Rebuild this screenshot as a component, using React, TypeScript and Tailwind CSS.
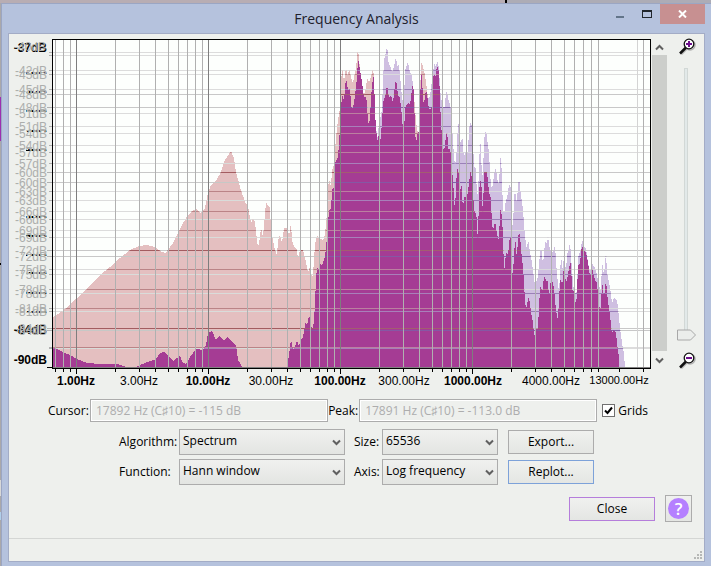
import type { ReactNode } from 'react';

const BASE = 368;

// outlines as x,y pairs, closed down to the axis
const PINK =
  '52,318 58,314 65,309 76,299 85,291 100,275 110,267 120,258 130,250 139,246 147,245 155,247 162,252 165,253 168,250 173,243 180,229 187,216 192,211 196,209 201,213 205,208 208,193 211,185 215,182 220,174 225,160 229,154 231,151 234,158 236,172 240,187 243,196 246,204 248,206 251,223 253,218 255,222 257,240 258,247 260,238 261,227 263,237 265,215 266,202 268,206 270,208 271,230 273,240 275,250 277,255 278,241 280,235 282,243 284,228 288,228 289,237 291,223 292,240 294,246 297,250 298,260 300,250 303,250 306,262 308,273 310,266 311,275 313,277 314,257 316,237 318,235 319,240 321,238 323,241 325,235 327,212 328,190 329,179 331,187 332,170 334,165 336,137 338,120 340,108 341,87 342,66 344,82 346,68 348,77 349,67 351,78 353,83 355,73 356,68 358,47 359,60 361,77 362,88 364,95 366,88 367,78 369,82 371,77 373,68 374,78 375,110 376,150 413,150 414,93 415,110 417,130 419,133 421,63 422,63 423,67 425,75 427,90 428,100 429,150';

const LAVENDER =
  '375,150 375,123 377,133 378,140 379,117 380,120 382,110 383,80 384,63 385,54 386,54 387,45 388,55 389,68 390,63 391,70 393,71 394,65 395,63 396,55 397,66 399,64 400,77 401,84 402,100 404,100 405,70 406,68 408,61 409,69 412,76 413,85 414,100 415,150 420,150 425,110 428,98 430,96 432,80 434,65 435,63 436,68 437,60 439,68 440,87 441,98 443,107 445,107 446,90 448,97 449,103 450,102 452,123 453,143 455,167 457,147 458,119 459,128 461,147 462,134 463,143 464,160 465,150 467,158 468,147 469,133 470,122 472,126 473,145 474,163 475,170 476,166 477,200 479,175 480,133 482,175 483,176 484,140 486,130 487,138 489,153 491,187 493,185 494,173 496,168 497,178 499,185 500,163 501,153 502,183 503,207 504,217 506,199 507,199 509,184 511,188 512,227 513,223 515,184 516,203 517,198 519,178 521,195 523,210 525,237 527,250 528,239 530,252 532,263 534,278 535,285 538,277 539,264 541,246 543,265 545,242 547,243 548,237 550,250 553,252 555,245 557,275 559,292 560,275 561,256 563,272 564,251 566,272 567,255 569,248 570,242 572,270 574,293 577,292 578,257 581,250 582,239 584,247 586,249 588,262 590,272 592,263 595,268 597,275 599,285 601,292 602,261 604,275 606,253 607,273 610,287 612,303 614,298 617,300 619,317 620,328 622,343 624,353 625,368';

const MAGENTA =
  '52,348 57,349 63,352 70,355 77,359 87,363 100,364 117,364 127,367 134,368 140,365 150,361 156,359 160,353 164,352 168,355 173,361 177,358 180,356 183,363 186,364 190,357 196,349 203,350 206,345 208,333 212,331 216,340 219,336 224,340 228,337 233,343 236,345 238,360 240,363 242,367 287,367 289,355 291,339 293,350 296,344 297,340 299,346 301,339 303,337 305,325 306,322 307,326 309,315 311,323 312,331 314,322 315,303 316,280 317,267 319,270 320,264 322,266 325,257 327,237 328,220 330,207 331,210 332,190 334,187 335,163 338,157 339,143 341,110 342,95 344,100 346,78 348,90 350,88 351,103 352,110 354,103 355,95 357,78 358,58 360,70 362,82 363,90 364,97 366,97 367,103 368,124 370,120 371,97 373,77 374,77 375,110 376,130 378,143 379,130 380,145 382,123 383,103 384,100 386,93 387,84 389,98 391,95 393,103 394,93 396,79 398,95 400,98 402,117 403,130 404,135 405,108 408,103 410,105 411,97 413,83 414,95 415,130 416,143 418,131 419,133 420,110 421,68 423,95 424,108 425,93 427,91 428,105 430,110 432,106 433,83 434,70 435,80 437,65 439,72 440,100 441,123 442,137 444,153 445,143 447,131 449,155 450,143 451,160 453,180 455,213 456,183 458,164 460,200 461,178 463,210 464,197 467,198 469,183 471,169 472,182 475,217 476,209 478,242 479,190 481,178 483,215 484,172 487,172 489,192 491,198 492,227 494,228 495,220 497,235 499,240 500,213 501,207 503,233 504,273 506,253 508,255 510,235 511,240 512,278 514,260 515,236 517,260 518,235 520,233 521,250 523,267 525,300 526,310 528,299 529,297 531,312 533,323 534,335 536,333 537,325 538,332 539,303 541,282 542,295 544,276 547,282 548,280 549,300 551,278 553,283 554,288 556,310 558,321 559,297 561,275 562,288 564,266 566,283 568,275 569,268 571,261 572,290 574,292 576,305 577,293 578,265 580,263 582,244 583,250 586,252 588,262 590,277 592,268 595,280 597,283 599,307 601,308 602,280 604,298 606,280 608,302 610,315 612,335 613,330 616,333 617,343 619,357 619,368';

const close = (points: string) => {
  const list = points.split(' ');
  const first = list[0].split(',')[0];
  const last = list[list.length - 1].split(',')[0];
  return `${first},${BASE} ${points} ${last},${BASE}`;
};

// [y, strong]
const FIRST_GRID: [number, boolean][] = [
  [55, false], [74, false], [94, true], [113, false], [133, false], [152, false], [172, true], [191, false],
  [211, false], [230, false], [250, true], [269, false], [289, false], [308, false], [328, true], [347, false],
];
const SECOND_GRID: [number, boolean][] = [
  [52, false], [70, false], [89, false], [107, true], [126, false], [145, false], [163, false], [182, true],
  [200, false], [219, false], [237, false], [256, true], [274, false], [293, false], [311, false], [330, true], [348, false],
];

const MINOR_X = [
  55, 63, 70, 115, 139, 155, 168, 178, 187, 195, 202, 247, 271, 287, 300, 310, 319, 327, 334, 379, 403, 419, 432,
  442, 451, 459, 466, 511, 535, 551, 564, 574, 583, 591, 598, 643,
];
const MAJOR_X = [76, 208, 340, 472];

const FIRST_LABELS: [string, number][] = [
  ['-45dB', 75], ['-48dB', 95], ['-51dB', 114], ['-54dB', 134], ['-57dB', 153], ['-60dB', 173], ['-63dB', 192],
  ['-66dB', 212], ['-69dB', 231], ['-72dB', 251], ['-75dB', 270], ['-78dB', 290], ['-81dB', 309], ['-84dB', 329],
];
const SECOND_LABELS: [string, number][] = [
  ['-42dB', 71], ['-45dB', 90], ['-48dB', 108], ['-51dB', 127], ['-54dB', 146], ['-57dB', 164], ['-60dB', 183],
  ['-63dB', 201], ['-66dB', 220], ['-69dB', 238], ['-72dB', 257], ['-75dB', 275], ['-78dB', 294], ['-81dB', 312],
  ['-84dB', 331],
];
const BOLD_LABELS: [string, number][] = [
  ['-42dB', 71], ['-45dB', 90], ['-48dB', 109], ['-51dB', 129], ['-54dB', 148], ['-66dB', 215], ['-69dB', 234],
  ['-72dB', 253], ['-75dB', 271], ['-78dB', 291], ['-81dB', 310],
];

const X_LABELS: [string, number, boolean][] = [
  ['1.00Hz', 76, true], ['3.00Hz', 139, false], ['10.00Hz', 208, true], ['30.00Hz', 271, false],
  ['100.00Hz', 340, true], ['300.00Hz', 404, false], ['1000.00Hz', 473, true], ['4000.00Hz', 551, false],
];

function HLines({ rows, soft, strong, clip }: { rows: [number, boolean][]; soft: string; strong: string; clip?: string }) {
  return (
    <g clipPath={clip}>
      {rows.map(([y, isStrong]) => (
        <rect key={y} x={53} y={y} width={597} height={1} fill={isStrong ? strong : soft} />
      ))}
    </g>
  );
}

function SpectrumPlot() {
  return (
    <svg
      viewBox="9 34 643 356"
      className="block min-w-0 flex-1"
      role="img"
      aria-label="Spectrum"
      fontFamily='"Liberation Sans", Arial, sans-serif'
      fontSize={12}
    >
      <defs>
        <clipPath id="pink"><polygon points={close(PINK)} /></clipPath>
        <clipPath id="lavender"><polygon points={close(LAVENDER)} /></clipPath>
        <clipPath id="magenta"><polygon points={close(MAGENTA)} /></clipPath>
        <clipPath id="slivers">
          {BOLD_LABELS.map(([, y]) => (
            <rect key={y} x={26} y={y + 1} width={22} height={2} />
          ))}
        </clipPath>
      </defs>

      <g shapeRendering="crispEdges">
        <rect x={52} y={39} width={599} height={330} fill="#fdfffd" />
        <HLines rows={FIRST_GRID} soft="#dcdcdc" strong="#c8c8c8" />
        <HLines rows={SECOND_GRID} soft="#dcdcdc" strong="#c8c8c8" />
        <polygon points={close(PINK)} fill="#e4bfc0" />
        <HLines rows={FIRST_GRID} soft="#bb8487" strong="#a35c60" clip="url(#pink)" />
        <HLines rows={SECOND_GRID} soft="#d9dcda" strong="#c6c8c6" clip="url(#pink)" />
        <polygon points={close(LAVENDER)} fill="#cfbfe1" />
        <HLines rows={FIRST_GRID} soft="#d9d9dc" strong="#c5c0c8" clip="url(#lavender)" />
        <HLines rows={SECOND_GRID} soft="#9b80b8" strong="#8465a8" clip="url(#lavender)" />
        <polygon points={close(MAGENTA)} fill="#a53c94" />
        <HLines rows={FIRST_GRID} soft="#bb80a0" strong="#a35d70" clip="url(#magenta)" />
        <HLines rows={SECOND_GRID} soft="#a880ba" strong="#8558a4" clip="url(#magenta)" />

        {MINOR_X.map((x) => (
          <rect key={x} x={x} y={40} width={1} height={328} fill="#b0b0b0" />
        ))}
        <rect x={637} y={40} width={1} height={328} fill="#d4d4d4" />
        {MAJOR_X.map((x) => (
          <rect key={x} x={x} y={40} width={1} height={328} fill="#7e7e7e" />
        ))}

        <rect x={53} y={367} width={597} height={1} fill="#808080" />
        <path d="M52 39h599v330H52zM53 40v328h597V40z" fill="#000" fillRule="evenodd" />
        <rect x={47} y={367} width={5} height={1} fill="#000" />
        {[...MINOR_X, 619].map((x) => (
          <rect key={x} x={x} y={369} width={1} height={3} fill="#000" />
        ))}
        {MAJOR_X.map((x) => (
          <rect key={x} x={x} y={369} width={1} height={5} fill="#000" />
        ))}
        {[...FIRST_GRID, ...SECOND_GRID].map(([y, isStrong]) => (
          <rect key={y} x={isStrong ? 47 : 49} y={y} width={isStrong ? 5 : 3} height={1} fill="#b0b0b0" />
        ))}
      </g>

      <g textAnchor="end" fontWeight={700}>
        <text x={47} y={52}>-37dB</text>
        <text x={47} y={334}>-84dB</text>
        <text x={47} y={364}>-90dB</text>
        <g clipPath="url(#slivers)">
          {BOLD_LABELS.map(([label, y]) => (
            <text key={y} x={47} y={y + 5}>{label}</text>
          ))}
        </g>
      </g>
      <g textAnchor="end" fill="#acaeac">
        <text x={46} y={51}>-40dB</text>
        {FIRST_LABELS.map(([label, y]) => (
          <text key={y} x={47} y={y + 4}>{label}</text>
        ))}
        {SECOND_LABELS.map(([label, y]) => (
          <text key={y} x={47} y={y + 4}>{label}</text>
        ))}
      </g>
      <g textAnchor="middle">
        {X_LABELS.map(([label, x, bold]) => (
          <text key={label} x={x} y={385} fontWeight={bold ? 700 : 400}>{label}</text>
        ))}
        <text x={619} y={384} fontSize={11}>13000.00Hz</text>
      </g>
    </svg>
  );
}

function Chevron({ className }: { className: string }) {
  return (
    <svg viewBox="0 0 9 7" className={`h-[7px] w-[9px] ${className}`} aria-hidden="true">
      <path d="M1 1.5 4.5 5 8 1.5" fill="none" stroke="#606060" strokeWidth="2" />
    </svg>
  );
}

function Magnifier({ plus }: { plus?: boolean }) {
  return (
    <svg viewBox="0 0 18 18" className="block h-[18px] w-[18px]" aria-hidden="true">
      <path d="m3 16 6-6" stroke="#b8b8b8" strokeWidth="3" />
      <circle cx="12" cy="7" r="5" fill="none" stroke="#b0b0b0" strokeWidth="1.5" />
      <path d="m2 15.500 6-6" stroke="#111" strokeWidth="2.500" />
      <circle cx="11" cy="6" r="4.800" fill="#fff" stroke="#111" strokeWidth="1.300" />
      <path d="M8 5h6v2H8z" fill="#6d0f8c" />
      {plus && <path d="M10 3h2v6h-2z" fill="#6d0f8c" />}
    </svg>
  );
}

function Choice({ id, label, value }: { id: string; label: string; value: string }) {
  return (
    <>
      <label htmlFor={id}>{label}</label>
      <div className="relative">
        <select
          id={id}
          className="block h-[26px] w-full appearance-none rounded-none border border-[#acacac] bg-linear-to-b from-[#f0f1ef] to-[#e3e5e2] pb-0.5 pl-[3px] outline-none"
        >
          <option>{value}</option>
        </select>
        <Chevron className="pointer-events-none absolute right-1 top-[10px]" />
      </div>
    </>
  );
}

function PushButton({ border, children }: { border: string; children: ReactNode }) {
  return (
    <button type="button" className={`h-6 w-[86px] border bg-linear-to-b from-[#f0f1ef] to-[#e4e6e3] ${border}`}>
      {children}
    </button>
  );
}

function Field({ id, label, value, width }: { id: string; label: string; value: string; width: string }) {
  return (
    <>
      <label htmlFor={id} className={`whitespace-nowrap ${width}`}>{label}</label>
      <input
        id={id}
        type="text"
        readOnly
        value={value}
        className="h-[23px] min-w-0 flex-1 border border-[#acacac] bg-[#eef0ed] px-[5px] text-[#adadad] inset-ring inset-ring-white outline-none"
      />
    </>
  );
}

function TitleBar() {
  return (
    <div className="grid h-[29px] grid-cols-[1fr_auto_1fr] pl-1.5">
      <div />
      <h1 className="pt-[5px] text-[14px] leading-5 text-[#20202c]">Frequency Analysis</h1>
      <div className="flex items-start justify-end">
        <button type="button" aria-label="Minimize" className="mr-[18px] mt-3 h-0.5 w-2 bg-[#63758a]" />
        <button type="button" aria-label="Maximize" className="mr-2 mt-1.5 h-2 w-2.5 border border-t-2 border-[#20262c]" />
        <button type="button" aria-label="Close window" className="flex h-5 w-[45px] items-center justify-center bg-[#c79091]">
          <svg viewBox="0 0 9 8" className="h-2 w-[9px]" aria-hidden="true">
            <path d="m1 .5 7 7M8 .5l-7 7" stroke="#fff" strokeWidth="2" />
          </svg>
        </button>
      </div>
    </div>
  );
}

function PlotArea() {
  return (
    <div className="flex">
      <SpectrumPlot />
      <div className="mt-[5px] flex w-[15px] flex-col self-stretch pb-5">
        <button type="button" aria-label="Scroll up" className="flex h-4 items-center justify-center">
          <Chevron className="rotate-180" />
        </button>
        <div className="flex-1 bg-[#cccecb]" />
        <button type="button" aria-label="Scroll down" className="flex h-[19px] items-center justify-center">
          <Chevron className="" />
        </button>
      </div>
      <div className="ml-[10px] mr-[7px] flex w-5 flex-col items-center pb-5 pt-1">
        <button type="button" aria-label="Zoom in">
          <Magnifier plus />
        </button>
        <div className="relative mt-3 w-5 flex-1">
          <div className="ml-[7px] h-[268px] w-1 border border-[#d2d8d6] bg-[#e2e9e9]" />
          <svg viewBox="0 0 20 12" className="absolute bottom-[11px] left-0 h-3 w-5" aria-hidden="true">
            <path d="M.5 1h13l5 5-5 5H.5z" fill="#ebedeb" stroke="#a8a8a8" />
          </svg>
          <input
            type="range"
            aria-label="Zoom level"
            defaultValue={0}
            className="absolute inset-0 h-full w-5 opacity-0 [writing-mode:vertical-lr]"
          />
        </div>
        <button type="button" aria-label="Zoom out">
          <Magnifier />
        </button>
      </div>
    </div>
  );
}

export default function App() {
  return (
    <div className='flex min-h-screen flex-col bg-[#b5c2dd] font-["Open_Sans","Noto_Sans",sans-serif] text-[12px] leading-4 text-black'>
      <div className="flex h-[3px] bg-[#adacb6]">
        <div className="w-[71%] bg-[#b8adb3]" />
        <div className="w-0.5 bg-black" />
      </div>
      <div className="flex flex-1">
        <div className="flex w-px flex-col bg-[#aaa8aa]">
          <div className="mt-[94px] h-11 bg-[#9c2fb0]" />
          <div className="mt-[122px] h-0.5 bg-black" />
          <div className="mt-[215px] h-4 bg-[#d8d8d8]" />
          <div className="mt-4 h-2 bg-[#b0cfea]" />
        </div>
        <div className="flex-1 border-l border-t border-[#9ba6c3] pr-1.5">
          <TitleBar />
          <div className="ml-1.5 border border-[#a3acc6] bg-[#eef0ed]">
            <PlotArea />
            <div className="mt-[9px] flex items-center pl-[39px] pr-14">
              <Field id="cursor" label="Cursor:" value="17892 Hz (C♯10) = -115 dB" width="w-[42px]" />
              <Field id="peak" label="Peak:" value="17891 Hz (C♯10) = -113.0 dB" width="w-[31px]" />
              <label className="ml-[5px] flex items-center gap-[3px]">
                <span className="relative h-[13px] w-[13px]">
                  <input
                    type="checkbox"
                    defaultChecked
                    className="peer block h-[13px] w-[13px] appearance-none border border-[#707070] bg-white"
                  />
                  <svg
                    viewBox="0 0 13 13"
                    className="pointer-events-none absolute inset-0 hidden peer-checked:block"
                    aria-hidden="true"
                  >
                    <path d="M3 6.500 5.500 9 10 3.500" fill="none" stroke="#000" strokeWidth="2" />
                  </svg>
                </span>
                Grids
              </label>
            </div>

            <div className="mt-[7px] grid grid-cols-[60px_166px_9px_28px_116px_10px_86px] items-center justify-center gap-y-1">
              <Choice id="algorithm" label="Algorithm:" value="Spectrum" />
              <span />
              <Choice id="size" label="Size:" value="65536" />
              <span />
              <PushButton border="border-[#acacac]">Export...</PushButton>
              <Choice id="function" label="Function:" value="Hann window" />
              <span />
              <Choice id="axis" label="Axis:" value="Log frequency" />
              <span />
              <PushButton border="border-[#7da2d9]">Replot...</PushButton>
            </div>

            <div className="mt-2.5 flex items-center justify-end gap-2.5 pr-3">
              <PushButton border="border-[#b57edb]">Close</PushButton>
              <button
                type="button"
                aria-label="Help"
                className="flex h-[27px] w-[27px] items-center justify-center border border-[#acacac] bg-linear-to-b from-[#f0f1ef] to-[#e4e6e3]"
              >
                <span className="h-[21px] w-[21px] rounded-full bg-[#b580ff] text-[17px] font-semibold leading-[21px] text-white">?</span>
              </button>
            </div>

            <div className="mt-4 flex h-[23px] items-end justify-end border-t border-[#d4d6d4] p-0.5">
              <svg viewBox="0 0 8 8" className="h-2 w-2" fill="#b6b8b6" aria-hidden="true">
                <path d="M6 0h2v2H6zM3 3h2v2H3zM6 3h2v2H6zM0 6h2v2H0zM3 6h2v2H3zM6 6h2v2H6z" />
              </svg>
            </div>
          </div>
        </div>
      </div>
    </div>
  );
}
